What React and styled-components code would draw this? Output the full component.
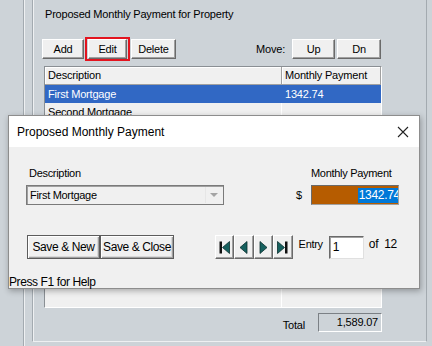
import React from 'react';
import styled, { createGlobalStyle } from 'styled-components';

const Global = createGlobalStyle`
  html, body { margin: 0; padding: 0; }
  body { font-family: "Liberation Sans", Arial, sans-serif; font-size: 11px; color: #000; }
`;

const Page = styled.div`
  position: relative;
  width: 432px;
  height: 346px;
  overflow: hidden;
  background: #cdd3d8;
  display: flex;
`;

const Gutter = styled.div`
  width: 23px;
  flex: none;
`;

const Rail = styled.div`
  width: 8px;
  flex: none;
  border-left: 1px solid #a3aab0;
  box-shadow: inset 1px 0 0 #eef0f2;
`;

const Panel = styled.div`
  width: 395px;
  height: 342px;
  flex: none;
  border-left: 1px solid #a3aab0;
  border-right: 1px solid #a3aab0;
  border-bottom: 1px solid #eef0f2;
  box-shadow: inset 1px 0 0 #eef0f2;
  padding: 7px 0 0 9px;
  box-sizing: border-box;
  display: flex;
  flex-direction: column;
`;

const PanelTitle = styled.div`
  margin-left: 3px;
  height: 14px;
  line-height: 14px;
  letter-spacing: -0.2px;
`;

const Toolbar = styled.div`
  margin-top: 15px;
  width: 339px;
  height: 26px;
  display: flex;
  align-items: center;
`;

const Button = styled.button`
  font: inherit;
  letter-spacing: -0.2px;
  width: ${p => p.$w}px;
  height: 20px;
  padding: 0;
  margin: 0 ${p => p.$gap || 0}px 0 0;
  background: #f0f0f0;
  border: 1px solid;
  border-color: #ffffff #6a6a6a #6a6a6a #ffffff;
  box-shadow: inset -1px -1px 0 #a0a0a0;
  color: #000;
  flex: none;
`;

const Highlight = styled.div`
  border: 2px solid #e3141f;
  padding: 0 1px;
  margin-right: 1px;
  height: 24px;
  box-sizing: border-box;
  display: flex;
  align-items: center;
`;

const MoveLabel = styled.span`
  margin-left: auto;
  margin-right: 7px;
  letter-spacing: -0.2px;
`;

const List = styled.div`
  margin: 4px 0 0 2px;
  width: 338px;
  height: 242px;
  box-sizing: border-box;
  border: 1px solid;
  border-color: #8a8f94 #ffffff #ffffff #8a8f94;
  background: #f0f0f0;
  display: grid;
  grid-template-columns: 237px 1fr;
  grid-template-rows: 18px 18px 18px 1fr;
`;

const HeadCell = styled.div`
  padding-left: 3px;
  line-height: 16px;
  background: #f0f0f0;
  border-right: 1px solid #a0a0a0;
  border-bottom: 1px solid #a0a0a0;
  box-shadow: inset 1px 1px 0 #fff;
  letter-spacing: -0.2px;
`;

const Cell = styled.div`
  padding-left: 3px;
  line-height: 18px;
  letter-spacing: -0.2px;
  background: ${p => (p.$selected ? '#3168c4' : 'transparent')};
  color: ${p => (p.$selected ? '#fff' : '#000')};
  border-right: ${p => (p.$divider ? '1px solid #ffffff' : 'none')};
`;

const Filler = styled.div`
  border-right: ${p => (p.$divider ? '1px solid #ffffff' : 'none')};
`;

const TotalRow = styled.div`
  margin-top: 5px;
  width: 340px;
  display: flex;
  align-items: center;
  justify-content: flex-end;
`;

const TotalLabel = styled.span`
  margin-right: 13px;
  letter-spacing: -0.2px;
  padding-top: 4px;
`;

const TotalBox = styled.div`
  width: 64px;
  height: 19px;
  box-sizing: border-box;
  border: 1px solid;
  border-color: #7b8085 #ffffff #ffffff #7b8085;
  text-align: right;
  padding-right: 3px;
  line-height: 16px;
  letter-spacing: -0.2px;
`;

/* dialog window, laid over the panel */
const Dialog = styled.div`
  position: absolute;
  left: 8px;
  top: 115px;
  width: 412px;
  height: 174px;
  box-sizing: border-box;
  border: 1px solid #8d8d8d;
  box-shadow: 1px 2px 6px rgba(0, 0, 0, 0.3);
  background: #f0f0f0;
  display: flex;
  flex-direction: column;
`;

const TitleBar = styled.div`
  height: 31px;
  flex: none;
  background: #fff;
  display: flex;
  align-items: center;
  justify-content: space-between;
  padding: 0 10px 0 8px;
  font-size: 12px;
`;

const CloseIcon = styled.svg`
  width: 12px;
  height: 12px;
`;

const Body = styled.div`
  flex: 1;
  display: flex;
  flex-direction: column;
`;

const FieldsRow = styled.div`
  display: flex;
  justify-content: space-between;
  padding: 19px 20px 0 17px;
`;

const Field = styled.div`
  display: flex;
  flex-direction: column;
`;

const Label = styled.span`
  margin-left: ${p => p.$indent || 0}px;
  height: 14px;
  line-height: 14px;
  margin-bottom: 5px;
  letter-spacing: -0.3px;
`;

const Combo = styled.div`
  width: 198px;
  height: 20px;
  box-sizing: border-box;
  border: 1px solid #7a7a7a;
  box-shadow: inset 1px 1px 0 #a0a0a0;
  background: #f0f0f0;
  display: flex;
  align-items: center;
`;

const ComboText = styled.span`
  flex: 1;
  padding-left: 3px;
  letter-spacing: -0.3px;
`;

const ComboArrow = styled.div`
  width: 16px;
  height: 16px;
  margin-right: 1px;
  border-left: 1px solid #e6e6e6;
  display: flex;
  align-items: center;
  justify-content: center;
  &::after {
    content: '';
    border-left: 4px solid transparent;
    border-right: 4px solid transparent;
    border-top: 4px solid #a4a4a4;
  }
`;

const MoneyGrid = styled.div`
  display: grid;
  grid-template-columns: auto 88px;
  column-gap: 9px;
  align-items: center;
`;

const Amount = styled.div`
  width: 88px;
  height: 20px;
  box-sizing: border-box;
  border: 1px solid;
  border-color: #6a6a6a #a0a0a0 #a0a0a0 #6a6a6a;
  background: #b65c00;
  overflow: hidden;
  display: flex;
  justify-content: flex-end;
  align-items: center;
  font-size: 12px;
`;

const Selected = styled.span`
  background: #0078d7;
  color: #fff;
  margin-right: -2px;
  line-height: 15px;
  padding-left: 1px;
  letter-spacing: -0.3px;
`;

const ActionsRow = styled.div`
  margin-top: 30px;
  padding: 0 22px 0 18px;
  display: flex;
  align-items: center;
`;

const SaveButton = styled.button`
  font: inherit;
  font-size: 12px;
  letter-spacing: -0.4px;
  width: ${p => p.$w}px;
  height: 24px;
  padding: 0;
  background: #f0f0f0;
  border: 1px solid #5c5c5c;
  box-shadow: inset 1px 1px 0 #ffffff, inset -1px -1px 0 #a0a0a0, inset -2px -2px 0 #d8d8d8;
  color: #000;
`;

const NavGroup = styled.div`
  margin-left: auto;
  display: flex;
`;

const NavButton = styled.button`
  width: 19.5px;
  height: 24px;
  padding: 0;
  background: #f0f0f0;
  border: 1px solid;
  border-color: #ffffff #6a6a6a #6a6a6a #ffffff;
  box-shadow: inset -1px -1px 0 #a0a0a0;
  display: flex;
  align-items: center;
  justify-content: center;
`;

const EntryLabel = styled.span`
  margin: 0 6px 0 6px;
  align-self: flex-start;
  line-height: 18px;
  letter-spacing: -0.3px;
`;

const EntryInput = styled.div`
  width: 35px;
  height: 23px;
  box-sizing: border-box;
  border: 1px solid;
  border-color: #6a6a6a #e0e0e0 #e0e0e0 #6a6a6a;
  box-shadow: inset 1px 1px 0 #a0a0a0;
  background: #fff;
  padding: 3px 0 0 3px;
  font-size: 12px;
`;

const OfLabel = styled.span`
  margin-left: 5px;
  align-self: flex-start;
  line-height: 18px;
  word-spacing: 3px;
  font-size: 12px;
  letter-spacing: -0.3px;
`;

const Status = styled.div`
  margin-top: auto;
  line-height: 12px;
  font-size: 12px;
  letter-spacing: -0.4px;
`;

const navShapes = {
  first: (
    <>
      <rect x="1.5" y="1.5" width="2.5" height="12" fill="#111" />
      <polygon points="11.5,1.5 4.5,7.5 11.5,13.5" fill="#17615f" stroke="#0a2f2f" strokeWidth="0.8" />
    </>
  ),
  prev: <polygon points="10,1.5 3,7.5 10,13.5" fill="#17615f" stroke="#0a2f2f" strokeWidth="0.8" />,
  next: <polygon points="3,1.5 10,7.5 3,13.5" fill="#17615f" stroke="#0a2f2f" strokeWidth="0.8" />,
  last: (
    <>
      <polygon points="1.5,1.5 8.5,7.5 1.5,13.5" fill="#17615f" stroke="#0a2f2f" strokeWidth="0.8" />
      <rect x="9" y="1.5" width="2.5" height="12" fill="#111" />
    </>
  ),
};

const NavIcon = ({ kind }) => (
  <svg width="13" height="15" viewBox="0 0 13 15">
    {navShapes[kind]}
  </svg>
);

export default function App() {
  return (
    <>
      <Global />
      <Page>
        <Gutter />
        <Rail />
        <Panel>
          <PanelTitle>Proposed Monthly Payment for Property</PanelTitle>
          <Toolbar>
            <Button $w={42} $gap={1}>Add</Button>
            <Highlight>
              <Button $w={39}>Edit</Button>
            </Highlight>
            <Button $w={45}>Delete</Button>
            <MoveLabel>Move:</MoveLabel>
            <Button $w={43} $gap={2}>Up</Button>
            <Button $w={44}>Dn</Button>
          </Toolbar>
          <List>
            <HeadCell>Description</HeadCell>
            <HeadCell>Monthly Payment</HeadCell>
            <Cell $selected>First Mortgage</Cell>
            <Cell $selected>1342.74</Cell>
            <Cell $divider>Second Mortgage</Cell>
            <Cell />
            <Filler $divider />
            <Filler />
          </List>
          <TotalRow>
            <TotalLabel>Total</TotalLabel>
            <TotalBox>1,589.07</TotalBox>
          </TotalRow>
        </Panel>

        <Dialog>
          <TitleBar>
            <span>Proposed Monthly Payment</span>
            <CloseIcon viewBox="0 0 12 12">
              <path d="M1 1 L11 11 M11 1 L1 11" stroke="#222" strokeWidth="1.1" />
            </CloseIcon>
          </TitleBar>
          <Body>
            <FieldsRow>
              <Field>
                <Label $indent={3}>Description</Label>
                <Combo>
                  <ComboText>First Mortgage</ComboText>
                  <ComboArrow />
                </Combo>
              </Field>
              <MoneyGrid>
                <span />
                <Label>Monthly Payment</Label>
                <span>$</span>
                <Amount>
                  <Selected>1342.74</Selected>
                </Amount>
              </MoneyGrid>
            </FieldsRow>
            <ActionsRow>
              <SaveButton $w={73}>Save &amp; New</SaveButton>
              <SaveButton $w={74}>Save &amp; Close</SaveButton>
              <NavGroup>
                <NavButton><NavIcon kind="first" /></NavButton>
                <NavButton><NavIcon kind="prev" /></NavButton>
                <NavButton><NavIcon kind="next" /></NavButton>
                <NavButton><NavIcon kind="last" /></NavButton>
              </NavGroup>
              <EntryLabel>Entry</EntryLabel>
              <EntryInput>1</EntryInput>
              <OfLabel>of 12</OfLabel>
            </ActionsRow>
            <Status>Press F1 for Help</Status>
          </Body>
        </Dialog>
      </Page>
    </>
  );
}
